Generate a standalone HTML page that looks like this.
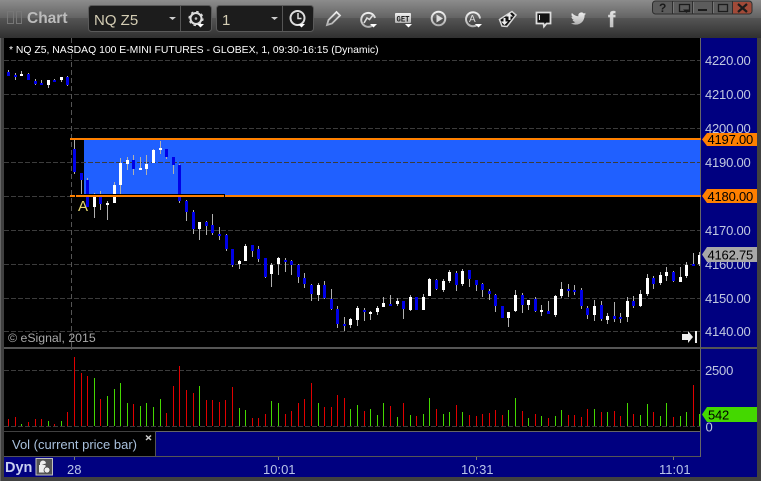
<!DOCTYPE html>
<html><head><meta charset="utf-8"><style>
html,body{margin:0;padding:0;background:#404040;width:761px;height:481px;overflow:hidden}
svg{display:block}
text{font-family:"Liberation Sans",sans-serif}
</style></head><body>
<svg width="761" height="481" viewBox="0 0 761 481" xmlns="http://www.w3.org/2000/svg">
<defs>
<linearGradient id="t1" x1="0" y1="0" x2="0" y2="1"><stop offset="0" stop-color="#8c8c8c"/><stop offset="1" stop-color="#636363"/></linearGradient>
<linearGradient id="t2" x1="0" y1="0" x2="0" y2="1"><stop offset="0" stop-color="#555"/><stop offset="1" stop-color="#303030"/></linearGradient>
<linearGradient id="ic" x1="0" y1="0" x2="0" y2="1"><stop offset="0" stop-color="#f0f0f0"/><stop offset="1" stop-color="#b0b0b0"/></linearGradient>
</defs>
<rect width="761" height="481" fill="#404040"/>
<rect x="0" y="0" width="761" height="18" fill="url(#t1)"/>
<rect x="0" y="18" width="761" height="20" fill="url(#t2)"/>
<rect x="0" y="38" width="1" height="443" fill="#666"/>
<rect x="4" y="38" width="697" height="310" fill="#000"/>
<rect x="4" y="349" width="697" height="82" fill="#000"/>
<rect x="4" y="432" width="151" height="24" fill="#000"/>
<rect x="155" y="432" width="545" height="24" fill="#000080"/>
<rect x="4" y="457" width="753" height="20" fill="#000080"/>
<rect x="701" y="38" width="56" height="419" fill="#000080"/>
<rect x="4" y="347" width="753" height="2" fill="#555"/>
<rect x="155" y="431" width="546" height="1" fill="#666"/>
<rect x="155" y="431" width="1" height="25" fill="#555"/>
<rect x="4" y="456" width="697" height="1" fill="#555"/>
<rect x="700" y="38" width="1" height="419" fill="#666"/>

<!-- toolbar -->
<rect x="7.5" y="11.5" width="6" height="12" fill="none" stroke="#777"/>
<rect x="16.5" y="11.5" width="5" height="12" fill="none" stroke="#777"/>
<text x="27" y="23" font-size="15.5" font-weight="bold" fill="#bcbcbc">Chart</text>
<rect x="88.5" y="5.5" width="123" height="26" rx="3" fill="#1c1c1c" stroke="#5a5a5a"/>
<rect x="180" y="6" width="1" height="25" fill="#555"/>
<text x="94" y="25" font-size="15" fill="#d4cdb4">NQ Z5</text>
<path d="M169 17h7l-3.5 3z" fill="#ccc"/>
<circle cx="196" cy="18.5" r="5.5" fill="none" stroke="#ddd" stroke-width="2"/>
<circle cx="196" cy="18.5" r="7" fill="none" stroke="#ddd" stroke-width="1.2" stroke-dasharray="2.5 3"/>
<circle cx="196" cy="18.5" r="1.3" fill="#bbb"/>
<path d="M197 24h7l-3.5 3.5z" fill="#fff"/>
<rect x="216.5" y="5.5" width="97" height="26" rx="3" fill="#1c1c1c" stroke="#5a5a5a"/>
<rect x="282" y="6" width="1" height="25" fill="#555"/>
<text x="222" y="25" font-size="15" fill="#d4cdb4">1</text>
<path d="M271 17h7l-3.5 3z" fill="#ccc"/>
<circle cx="297.5" cy="18" r="7" fill="none" stroke="#ddd" stroke-width="2"/>
<path d="M298 13v5.5h3.5" fill="none" stroke="#ddd" stroke-width="1.5"/>
<path d="M298 24h7l-3.5 3.5z" fill="#fff"/>

<path d="M327 25L328.5 20L336.500 12L340 15.500L332 23.500Z" fill="none" stroke="url(#ic)" stroke-width="1.8"/>
<path d="M373 25A7 7 0 1 1 375 18" fill="none" stroke="url(#ic)" stroke-width="2"/>
<path d="M364 23L367 18L369.5 19.5L373 15" fill="none" stroke="#ddd" stroke-width="1.6"/>
<path d="M370 24h7l-3.5 3.5z" fill="#fff"/>
<rect x="395" y="13" width="16" height="10" rx="1" fill="url(#ic)"/>
<text x="396.5" y="21.5" font-size="8.5" font-weight="bold" textLength="13" lengthAdjust="spacingAndGlyphs" fill="#222" style="font-family:'Liberation Mono',monospace">GET</text>
<path d="M405 24h7l-3.5 3.5z" fill="#fff"/>
<circle cx="438.5" cy="18.5" r="6.8" fill="none" stroke="url(#ic)" stroke-width="2"/>
<path d="M436.5 14.5L443 18.5L436.5 22.5Z" fill="#ddd"/>
<path d="M477 25A7 7 0 1 1 480 18.5" fill="none" stroke="url(#ic)" stroke-width="2"/>
<text x="469" y="22" font-size="10" fill="#ddd">A</text>
<path d="M475 24h7l-3.5 3.5z" fill="#fff"/>
<path d="M499.5 19.5L512 11.5L516 15L507 26.5L502 26Z" fill="#111" stroke="#d8d8d8" stroke-width="1.5"/>
<path d="M509.5 13L513 16.5H510.5V20H508.5V16.5H506ZM504.5 25L501 21.5H503.5V18H505.5V21.5H508Z" fill="#eee"/>
<path d="M536.5 12.5H550.5V23.5H546.5L544 26.500L543.5 23.5H536.5Z" fill="#111" stroke="#ddd" stroke-width="1.8"/>
<rect x="539" y="15" width="1" height="5" fill="#eee"/>
<g transform="translate(570.5 10.8) scale(.68)"><path d="M23 4.6c-.8.4-1.7.6-2.6.7.9-.6 1.600-1.4 2-2.5-.9.5-1.9.9-2.9 1.1A4.6 4.6 0 0 0 11.6 8C7.8 7.8 4.4 6 2.1 3.2c-1.2 2.1-.6 4.8 1.4 6.1-.7 0-1.4-.2-2-.6 0 2.2 1.5 4.1 3.6 4.5-.7.2-1.4.2-2.1.1.6 1.8 2.3 3.1 4.3 3.2A9.2 9.2 0 0 1 .5 18.4c2 1.3 4.4 2 7 2 8.5 0 13.2-7 13.2-13.2v-.6c.9-.6 1.7-1.5 2.3-2Z" fill="url(#ic)"/></g>
<text x="608" y="27" font-size="22" font-weight="bold" fill="url(#ic)" stroke="#ccc" stroke-width=".4">f</text>

<!-- window buttons -->
<path d="M652.5 4a3 3 0 0 1 3-3H749a3 3 0 0 1 3 3V11a3 3 0 0 1-3 3H655.5a3 3 0 0 1-3-3Z" fill="#5c5c5c" stroke="#2e2e2e"/>
<path d="M733 2H749a2.500 2.500 0 0 1 2.500 2.500V11a2.500 2.500 0 0 1-2.500 2.500H733Z" fill="#a14a38"/>
<path d="M672.5 1V14M692.5 1V14M712.5 1V14M732.5 1V14" stroke="#2e2e2e"/>
<path d="M673.5 2V13M693.5 2V13M713.5 2V13" stroke="#777"/>
<text x="659" y="12" font-size="12" font-weight="bold" fill="#1a1a1a">?</text>
<rect x="679.5" y="4.5" width="10" height="7" fill="none" stroke="#1c1c1c" stroke-width="1.3"/>
<path d="M683 9.5h7l-3.5 3.5z" fill="#1c1c1c"/>
<rect x="698" y="9" width="9" height="2" fill="#1c1c1c"/>
<rect x="718.5" y="4.5" width="9" height="7" fill="none" stroke="#1c1c1c" stroke-width="1.3"/>
<path d="M738 4L747 12M747 4L738 12" stroke="#1c1c1c" stroke-width="2.2"/>

<!-- band -->
<rect x="84" y="140" width="616" height="55" fill="#2060ff"/>

<!-- grid -->
<g stroke="#3c3c3c" stroke-width="1" stroke-dasharray="5 2" shape-rendering="crispEdges">
<path d="M4 60.5H700M4 94.5H700M4 128.5H700M4 162.5H700M4 196.5H700M4 230.5H700M4 264.5H700M4 298.5H700M4 331.5H700M4 370.5H700M4 426.5H700"/>
</g>
<path d="M71.5 38V347" stroke="#555" stroke-dasharray="5 3" shape-rendering="crispEdges"/>
<path d="M71.5 349V350" stroke="#555"/>

<!-- candles: wicks -->
<path shape-rendering="crispEdges" stroke="#b0b0b0" fill="none" d="M8.5 70V76M15.5 73V80M21.5 71V76M28.5 73V80M35.5 79V85M41.5 80V85M48.5 80V88M54.5 79V82M61.5 77V82M67.5 76V86M74.5 139V174M81.5 173V195M87.5 178V207M94.5 193V218M100.5 191V210M107.5 201V220M114.5 182V203M120.5 158V194M127.5 157V170M133.5 155V175M140.5 157V170M146.5 155V175M153.5 149V163M160.5 141V154M166.5 149V159M173.5 157V174M179.5 164V203M186.5 200V221M193.5 210V234M199.5 222V240M206.5 221V235M212.5 214V235M219.5 227V240M226.5 234V251M232.5 249V267M239.5 260V269M245.5 244V261M252.5 245V257M258.5 246V262M265.5 258V278M271.5 263V287M278.5 257V275M285.5 258V272M291.5 260V275M298.5 264V283M304.5 273V288M311.5 284V301M318.5 283V301M324.5 281V299M331.5 289V310M337.5 306V328M344.5 317V331M350.5 318V328M357.5 306V326M364.5 308V321M370.5 311V320M377.5 306V315M383.5 297V307M390.5 295V306M397.5 298V306M403.5 301V319M410.5 295V311M416.5 297V310M423.5 294V310M429.5 278V296M436.5 279V290M443.5 279V292M449.5 270V283M456.5 271V291M462.5 269V286M469.5 270V287M476.5 280V291M482.5 283V297M489.5 289V300M495.5 294V312M502.5 306V318M508.5 312V327M515.5 290V312M522.5 293V313M528.5 300V310M535.5 297V312M541.5 305V316M548.5 301V314M555.5 295V317M561.5 282V298M568.5 284V297M574.5 285V295M581.5 288V309M587.5 306V319M594.5 300V321M601.5 301V321M607.5 313V324M614.5 302V322M620.5 313V323M627.5 297V322M633.5 296V308M640.5 290V307M647.5 274V296M653.5 276V289M660.5 272V285M666.5 267V281M673.5 271V282M680.5 267V282M686.5 262V278M693.5 253V266M699.5 252V266"/>
<!-- blue bodies -->
<path shape-rendering="crispEdges" stroke="#0000e6" stroke-width="3" fill="none" d="M8.5 72V76M15.5 75V77M28.5 74V80M35.5 81V84M41.5 83V85M54.5 80V82M67.5 77V85M74.5 149V172M81.5 173V180M87.5 180V207M100.5 196V204M133.5 160V169M166.5 149V157M173.5 157V165M179.5 165V201M186.5 201V212M193.5 212V229M206.5 222V226M212.5 225V233M219.5 234V236M226.5 235V249M232.5 249V265M252.5 245V251M258.5 249V259M265.5 258V277M285.5 260V262M291.5 261V265M298.5 265V277M304.5 278V284M311.5 285V294M324.5 285V298M331.5 299V309M337.5 309V324M344.5 324V326M364.5 310V312M390.5 304V306M403.5 301V309M416.5 297V310M436.5 280V289M456.5 273V285M469.5 270V279M476.5 280V285M482.5 284V290M489.5 291V294M495.5 295V306M502.5 306V318M522.5 295V305M535.5 299V311M548.5 311V314M568.5 289V291M574.5 290V292M581.5 290V306M587.5 308V315M601.5 305V319M614.5 316V319M620.5 317V319M633.5 301V306M653.5 278V284M673.5 272V281M693.5 264V266"/>
<!-- white bodies -->
<path shape-rendering="crispEdges" stroke="#fff" stroke-width="3" fill="none" d="M21.5 74V76M48.5 80V85M61.5 77V80M94.5 196V207M107.5 203V205M114.5 185V203M120.5 163V185M127.5 160V164M140.5 168V170M146.5 164V169M153.5 150V163M160.5 148V150M199.5 222V229M239.5 261V264M245.5 246V261M271.5 265V274M278.5 258V264M318.5 285V295M350.5 319V325M357.5 308V320M370.5 312V314M377.5 308V312M383.5 303V307M397.5 301V304M410.5 297V310M423.5 297V310M429.5 279V296M443.5 281V290M449.5 272V281M462.5 271V284M508.5 312V318M515.5 295V311M528.5 300V305M541.5 310V312M555.5 296V315M561.5 289V296M594.5 306V315M607.5 316V320M627.5 301V317M640.5 294V306M647.5 278V294M660.5 275V283M666.5 272V276M680.5 277V282M686.5 265V276"/>
<rect x="698" y="255" width="2" height="9" fill="#fff"/>

<!-- orange lines & box -->
<rect x="70" y="138" width="631" height="2" fill="#ff8000"/>
<rect x="70" y="195" width="631" height="2" fill="#ff8000"/>
<path d="M75.5 197V194.5H224.5V197" fill="none" stroke="#000" shape-rendering="crispEdges"/>
<text x="78" y="211" font-size="15" fill="#e8d870">A</text>

<!-- legend text on chart -->
<text x="9" y="53" font-size="10.4" fill="#fff">* NQ Z5, NASDAQ 100 E-MINI FUTURES - GLOBEX, 1, 09:30-16:15 (Dynamic)</text>
<text x="8" y="342" font-size="12.3" fill="#a8a8a8">© eSignal, 2015</text>
<path d="M682 334H688V331L693 337L688 343V340H682Z" fill="#eee"/>
<rect x="695" y="331" width="2" height="12" fill="#eee"/>

<!-- price axis -->
<g font-size="13" letter-spacing="-.2" fill="#c0c8e0">
<text x="705" y="65">4220.00</text>
<text x="705" y="99">4210.00</text>
<text x="705" y="133">4200.00</text>
<text x="705" y="167">4190.00</text>
<text x="705" y="235">4170.00</text>
<text x="705" y="269">4160.00</text>
<text x="705" y="303">4150.00</text>
<text x="705" y="336">4140.00</text>
<text x="705" y="375">2500</text>
<text x="705.500" y="431.500">0</text>
</g>
<path d="M702 139.5L707 133H757V146H707Z" fill="#ff8000"/>
<text x="707.500" y="144" font-size="13" letter-spacing="-.2" fill="#000">4197.00</text>
<path d="M702 196L707 189H757V203H707Z" fill="#ff8000"/>
<text x="707.500" y="201" font-size="13" letter-spacing="-.2" fill="#000">4180.00</text>
<path d="M702 254.5L707 247H757V262H707Z" fill="#a8a8a8"/>
<text x="707.500" y="259.500" font-size="13" letter-spacing="-.2" fill="#000">4162.75</text>
<path d="M702 414.5L707 407H757V422H707Z" fill="#44d800"/>
<text x="708" y="419.500" font-size="13" letter-spacing="-.2" fill="#000">542</text>

<!-- volume -->
<path shape-rendering="crispEdges" stroke="#e00000" fill="none" d="M8.5 419V426M15.5 417V426M28.5 422V426M35.5 419V426M41.5 419V426M54.5 424V426M67.5 412V426M74.5 357V426M81.5 373V426M87.5 376V426M100.5 399V426M133.5 404V426M166.5 413V426M173.5 386V426M179.5 366V426M186.5 390V426M193.5 393V426M206.5 400V426M212.5 400V426M219.5 402V426M225.5 400V426M232.5 387V426M252.5 418V426M258.5 418V426M265.5 414V426M285.5 414V426M291.5 411V426M298.5 403V426M304.5 399V426M311.5 383V426M324.5 407V426M331.5 407V426M337.5 395V426M344.5 398V426M364.5 411V426M390.5 406V426M403.5 403V426M416.5 416V426M436.5 409V426M456.5 405V426M469.5 415V426M476.5 416V426M482.5 414V426M489.5 413V426M495.5 410V426M502.5 415V426M522.5 411V426M535.5 414V426M548.5 418V426M568.5 415V426M574.5 415V426M581.5 417V426M587.5 409V426M601.5 412V426M614.5 411V426M620.5 416V426M633.5 414V426M653.5 412V426M673.5 417V426M693.5 385V426"/>
<path shape-rendering="crispEdges" stroke="#44d800" fill="none" d="M21.5 424V426M48.5 421V426M61.5 421V426M94.5 378V426M107.5 396V426M114.5 389V426M120.5 383V426M127.5 403V426M140.5 406V426M146.5 403V426M153.5 407V426M160.5 399V426M199.5 386V426M239.5 408V426M245.5 410V426M271.5 401V426M278.5 403V426M318.5 403V426M350.5 409V426M357.5 405V426M370.5 409V426M377.5 415V426M383.5 403V426M397.5 417V426M410.5 415V426M423.5 414V426M429.5 398V426M443.5 414V426M449.5 412V426M462.5 412V426M508.5 410V426M515.5 398V426M528.5 418V426M541.5 416V426M555.5 416V426M561.5 410V426M594.5 409V426M607.5 412V426M627.5 403V426M640.5 415V426M647.5 404V426M660.5 416V426M666.5 403V426M680.5 416V426M686.5 412V426M699.5 414V426"/>

<!-- legend -->
<text x="12" y="449" font-size="13" fill="#a8c0dc">Vol (current price bar)</text>
<path d="M146 435.5L151 440M151 435.5L146 440" stroke="#ccc" stroke-width="1.5"/>

<!-- bottom axis -->
<text x="5" y="472" font-size="14.5" font-weight="bold" fill="#c8d0f0">Dyn</text>
<rect x="36" y="458.5" width="16.5" height="16.5" fill="#555" stroke="#c0c0c0"/>
<path d="M39.5 472V465.5H45V472ZM40.5 465.5V463.5A2.5 2.5 0 0 1 45.5 463.5" fill="#eee" stroke="#eee" stroke-width="1"/>
<circle cx="47" cy="470" r="3" fill="#eee" stroke="#444" stroke-width=".8"/>
<g font-size="13" fill="#b8c4e8">
<text x="67" y="474">28</text>
<text x="263" y="474">10:01</text>
<text x="461" y="474">10:31</text>
<text x="659" y="474">11:01</text>
</g>
<path d="M74.5 457V460M278.5 457V460M476.5 457V460M673.5 457V460" stroke="#777" shape-rendering="crispEdges"/>
</svg>
</body></html>
